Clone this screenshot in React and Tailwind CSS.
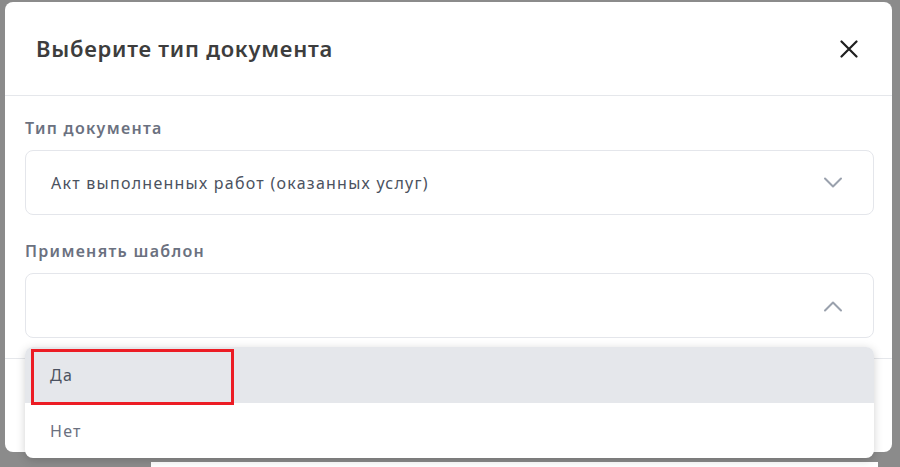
const font = { fontFamily: '"Noto Sans", "Open Sans", sans-serif' }

function Chevron({ up }) {
  return (
    <svg width="20" height="12" viewBox="0 0 20 12" fill="none" className="text-[#9aa1ad]">
      <path
        d={up ? 'M2 10.5 L10 2.5 L18 10.5' : 'M2 1.5 L10 9.5 L18 1.5'}
        stroke="currentColor"
        strokeWidth="2"
        strokeLinecap="round"
        strokeLinejoin="round"
      />
    </svg>
  )
}

function SelectBox({ value, open }) {
  return (
    <div className="h-[65px] rounded-lg border border-[#e4e6eb] bg-white flex items-center justify-between pl-[25px] pr-[30px]">
      <span className="text-[16px] tracking-[1.25px] text-[#4b5260]">{value}</span>
      <Chevron up={open} />
    </div>
  )
}

export default function App() {
  return (
    <div className="relative h-[467px] w-[900px] overflow-hidden bg-[#8b8b8b]" style={font}>
      {/* page behind the overlay */}
      <div className="absolute left-[151px] top-[462px] h-[5px] w-[727px] bg-white" />

      {/* Modal */}
      <div className="relative ml-[5px] mt-[2px] w-[887px] h-[450px] rounded-lg bg-white flex flex-col">
        <header className="h-[94px] shrink-0 flex items-center justify-between pl-[31px] pr-[34px] border-b border-[#e5e7eb]">
          <h2 className="text-[22px] font-semibold text-[#3d3d3d] tracking-[0.75px]">Выберите тип документа</h2>
          <svg width="18" height="18" viewBox="0 0 18 18" fill="none" className="text-[#1f1f1f]">
            <path d="M1.5 1.5 L16.5 16.5 M16.5 1.5 L1.5 16.5" stroke="currentColor" strokeWidth="2.2" strokeLinecap="round" />
          </svg>
        </header>

        <div className="pl-5 pr-[18px] pt-[22px] pb-5 flex flex-col">
          <label className="text-[16px] leading-[20px] font-semibold tracking-[1.3px] text-[#6b7180] mb-3">Тип документа</label>
          <SelectBox value="Акт выполненных работ (оказанных услуг)" />

          <label className="mt-[26px] text-[16px] leading-[20px] font-semibold tracking-[1.3px] text-[#6b7180] mb-3">Применять шаблон</label>
          <SelectBox value="" open />
        </div>

        <footer className="flex-1 border-t border-[#e5e7eb]" />

        {/* Dropdown */}
        <div className="absolute left-5 top-[345px] w-[849px] rounded-lg bg-white shadow-[0_2px_10px_rgba(0,0,0,0.18)] overflow-hidden">
          <div className="relative h-[56px] flex items-center px-[25px] bg-[#e5e7eb] text-[16px] tracking-[1.25px] text-[#4b5260]">
            Да
            <div className="absolute left-[6px] top-[2px] h-[56px] w-[203px] border-[3px] border-[#ec1c24]" />
          </div>
          <div className="h-[55px] flex items-center px-[25px] text-[16px] tracking-[1.25px] text-[#6b7180]">Нет</div>
        </div>
      </div>
    </div>
  )
}
